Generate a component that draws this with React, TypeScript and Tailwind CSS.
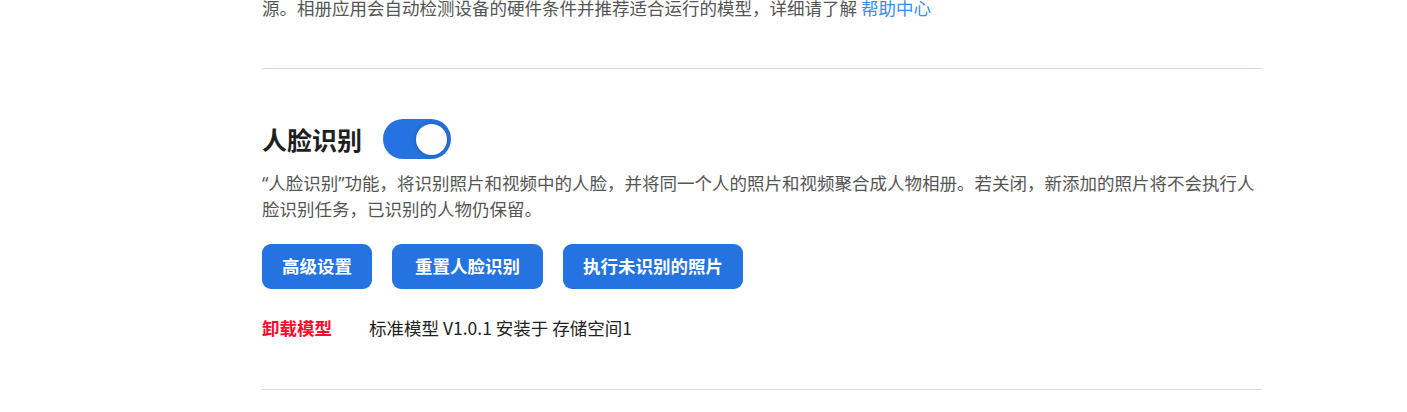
export default function App() {
  const font = { fontFamily: '"Noto Sans CJK SC", "Noto Sans", sans-serif' }
  const quote = "font-['Noto_Sans',sans-serif]"
  return (
    <div className="w-[1407px] h-[412px] bg-white overflow-hidden" style={font}>
      <div className="ml-[262px] w-[1000px] -mt-[5px]">
        <p className="text-[17.5px] leading-[25px] text-[#555]">
          源。相册应用会自动检测设备的硬件条件并推荐适合运行的模型，详细请了解 <span className="text-[#3b8ced]">帮助中心</span>
        </p>
        <div className="mt-[48px] h-px bg-[#d3dbe4]" />

        <div className="mt-[50px] flex items-center">
          <h2 className="text-[25px] leading-[40px] font-bold text-[#1f1f1f]">人脸识别</h2>
          <button className="ml-[21px] w-[68px] h-[40px] rounded-full bg-[#2473e0] flex items-center justify-end pr-[4px]">
            <span className="block w-[31px] h-[31px] rounded-full bg-white shadow-[0_0_4px_rgba(0,0,0,0.25)]" />
          </button>
        </div>
        <p className="mt-[11px] text-[17.5px] leading-[25px] text-[#555]">
          <span className={quote}>“</span>人脸识别<span className={quote}>”</span>功能，将识别照片和视频中的人脸，并将同一个人的照片和视频聚合成人物相册。若关闭，新添加的照片将不会执行人脸识别任务，已识别的人物仍保留。
        </p>

        <div className="mt-[23px] flex gap-[20px]">
          <button className="h-[45px] w-[110px] rounded-[9px] bg-[#2473e0] text-white text-[17.5px] font-bold">高级设置</button>
          <button className="h-[45px] w-[151px] rounded-[9px] bg-[#2473e0] text-white text-[17.5px] font-bold">重置人脸识别</button>
          <button className="h-[45px] w-[180px] rounded-[9px] bg-[#2473e0] text-white text-[17.5px] font-bold">执行未识别的照片</button>
        </div>

        <div className="mt-[27px] flex items-center text-[17.5px] leading-[24px]">
          <span className="font-bold text-[#ff0a2e] w-[107px]">卸载模型</span>
          <span className="text-[#222]">标准模型 V1.0.1 安装于 存储空间1</span>
        </div>
        <div className="mt-[49px] h-px bg-[#d3dbe4]" />
      </div>
    </div>
  )
}
